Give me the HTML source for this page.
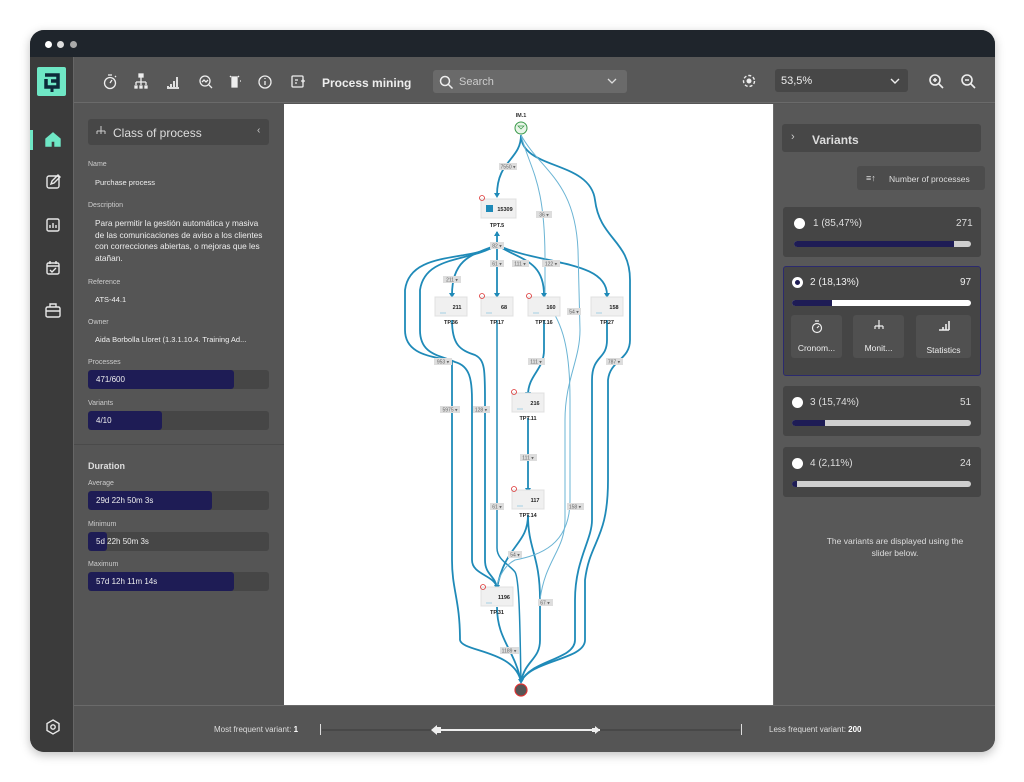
<!DOCTYPE html>
<html><head><meta charset="utf-8"><style>
*{box-sizing:border-box;margin:0;padding:0}
body{width:1024px;height:782px;background:#fff;font-family:"Liberation Sans",sans-serif;position:relative;overflow:hidden}
.a{position:absolute}
.win{left:30px;top:30px;width:965px;height:722px;border-radius:14px;background:#555;overflow:hidden;box-shadow:0 3px 10px rgba(0,0,0,.25)}
.lbl{font-size:7px;color:#ccc}
.val{font-size:7.5px;color:#f0f0f0}
.bar{height:19px;background:#464646;border-radius:3px;overflow:hidden}
.bar div{height:100%;background:#1e1c55;border-radius:3px;color:#eee;font-size:8px;padding:5px 0 0 8px;white-space:nowrap}
.card{background:#454545;border-radius:3px}
.trk{height:6px;background:#cfcfcf;border-radius:3px;overflow:hidden}
.trk div{height:100%;background:#1e1c55}
.rad{width:11px;height:11px;border-radius:50%;background:#fff}
.btn{background:#505050;border-radius:3px;color:#eee;font-size:8.5px;text-align:center}
svg text{font-family:"Liberation Sans",sans-serif}
</style></head><body>
<div class="a win">
 <div class="a" style="left:0;top:0;width:965px;height:27px;background:#1f252c"></div>
 <div class="a" style="left:15px;top:11px;width:7px;height:7px;border-radius:50%;background:#fff"></div>
 <div class="a" style="left:27px;top:11px;width:7px;height:7px;border-radius:50%;background:#ddd"></div>
 <div class="a" style="left:40px;top:11px;width:7px;height:7px;border-radius:50%;background:#aaa"></div>
 <div class="a" style="left:0;top:27px;width:43px;height:695px;background:#3b3b3b"></div>
 <div class="a" style="left:43px;top:27px;width:922px;height:46px;background:#585858;border-bottom:1px solid #6a6a6a"></div>
 <div class="a" style="left:43px;top:27px;width:1px;height:695px;background:#666"></div>
 <div class="a" style="left:743px;top:74px;width:222px;height:601px;background:#585858;border-left:1px solid #6a6a6a"></div>
 <div class="a" style="left:44px;top:675px;width:921px;height:47px;background:#555;border-top:1px solid #6a6a6a"></div>
</div>
<div class="a" style="left:37px;top:67px;width:29px;height:29px;background:#6fe7c5;border-radius:2px"></div>
<svg class="a" style="left:37px;top:67px" width="29" height="29" viewBox="0 0 29 29"><path d="M8 8h13v5M9 12v8h12v-6h-7" stroke="#0d2a3a" stroke-width="3.5" fill="none"/><path d="M15 20v5" stroke="#0d2a3a" stroke-width="3"/></svg>
<div class="a" style="left:30px;top:130px;width:3px;height:20px;background:#6fe7c5"></div>
<svg class="a" style="left:30px;top:100px" width="43" height="640" viewBox="0 0 43 640" fill="none" stroke="#e8e8e8" stroke-width="1.4">
 <path d="M16 46v-7l7-6 7 6v7h-5v-5h-4v5z" fill="#6fe7c5" stroke="#6fe7c5"/>
 <rect x="17" y="76" width="12" height="12" rx="2"/><path d="M21 84l1-3 6-6 2 2-6 6z"/>
 <rect x="17" y="119" width="12" height="12" rx="1.5"/><path d="M20 128v-3M23 128v-5M26 128v-3"/>
 <rect x="17" y="163" width="12" height="11" rx="1.5"/><path d="M17 166h12M20 161v3M26 161v3M20 170l2 2 4-4"/>
 <rect x="16" y="207" width="14" height="10" rx="1.5"/><path d="M20 207v-3h6v3M16 211h14"/>
 <path d="M23 620l6 3.5v7l-6 3.5-6-3.5v-7z"/><circle cx="23" cy="627" r="2.2"/>
</svg>
<svg class="a" style="left:95px;top:70px" width="220" height="24" viewBox="0 0 220 24" fill="none" stroke="#eee" stroke-width="1.3">
 <circle cx="15" cy="13" r="5.5"/><path d="M15 13l2-3M13 5h4M20 7l1-1"/>
 <path d="M46 5v4M41 12h10M41 12v3M46 9v6M51 12v3"/><rect x="44" y="4" width="4" height="3" fill="#eee"/><rect x="40" y="16" width="2" height="2" fill="#eee"/><rect x="45" y="16" width="2" height="2" fill="#eee"/><rect x="50" y="16" width="2" height="2" fill="#eee"/>
 <path d="M72 18h12M73 16v1M76 14v3M79 11v6M82 7v10" stroke-width="1.8"/>
 <circle cx="110" cy="11" r="5"/><path d="M114 15l3 3M107 12l2-2 2 2 2-2"/>
 <path d="M137 7h5v10h-5z" fill="#eee"/><path d="M135 6l1 1M144 6l-1 1M145 11h1"/>
 <circle cx="170" cy="12" r="6"/><path d="M170 11v4M170 8v1"/>
 <rect x="197" y="6" width="11" height="11" rx="1"/><path d="M200 10h3M200 13h2M206 11h4M208 9v4"/>
</svg>
<div class="a" style="left:322px;top:76px;font-size:12px;font-weight:bold;color:#eee">Process mining</div>
<div class="a" style="left:433px;top:70px;width:194px;height:23px;background:#6a6a6a;border-radius:3px"></div>
<svg class="a" style="left:438px;top:74px" width="16" height="16" fill="none" stroke="#eee" stroke-width="1.5"><circle cx="7" cy="7" r="4.5"/><path d="M10.5 10.5l4 4"/></svg>
<div class="a" style="left:459px;top:76px;font-size:11px;color:#ccc">Search</div>
<svg class="a" style="left:607px;top:77px" width="10" height="8" fill="none" stroke="#ddd" stroke-width="1.3"><path d="M1 2l4 4 4-4"/></svg>
<svg class="a" style="left:741px;top:73px" width="16" height="16" fill="none" stroke="#eee" stroke-width="1.4"><circle cx="8" cy="8" r="5.5" stroke-dasharray="3 2"/><circle cx="8" cy="8" r="1.8" fill="#eee"/></svg>
<div class="a" style="left:775px;top:69px;width:133px;height:23px;background:#474747;border-radius:3px"></div>
<div class="a" style="left:781px;top:75px;font-size:11px;color:#eee">53,5%</div>
<svg class="a" style="left:890px;top:77px" width="10" height="8" fill="none" stroke="#eee" stroke-width="1.4"><path d="M1 2l4 4 4-4"/></svg>
<svg class="a" style="left:927px;top:72px" width="60" height="18" fill="none" stroke="#eee" stroke-width="1.6"><circle cx="8" cy="8" r="5"/><path d="M12 12l4 4M6 8h4M8 6v4"/><circle cx="40" cy="8" r="5"/><path d="M44 12l4 4M38 8h4"/></svg>
<div class="a" style="left:88px;top:119px;width:181px;height:26px;background:#474747;border-radius:3px"></div>
<svg class="a" style="left:95px;top:125px" width="12" height="12" fill="none" stroke="#ccc" stroke-width="1"><path d="M6 1v4M2 6h8M2 6v3M6 5v4M10 6v3"/></svg>
<div class="a" style="left:113px;top:126px;font-size:12px;color:#ddd">Class of process</div>
<div class="a" style="left:257px;top:125px;font-size:10px;color:#ccc">‹</div>
<div class="a lbl" style="left:88px;top:161px">Name</div>
<div class="a val" style="left:95px;top:178px">Purchase process</div>
<div class="a lbl" style="left:88px;top:202px">Description</div>
<div class="a" style="left:95px;top:218px;width:170px;font-size:8.3px;line-height:11.5px;color:#eee">Para permitir la gestión automática y masiva de las comunicaciones de aviso a los clientes con correcciones abiertas, o mejoras que les atañan.</div>
<div class="a lbl" style="left:88px;top:279px">Reference</div>
<div class="a val" style="left:95px;top:295px">ATS-44.1</div>
<div class="a lbl" style="left:88px;top:319px">Owner</div>
<div class="a val" style="left:95px;top:335px">Aida Borbolla Lloret (1.3.1.10.4. Training Ad...</div>
<div class="a lbl" style="left:88px;top:359px">Processes</div>
<div class="a bar" style="left:88px;top:370px;width:181px"><div style="width:146px">471/600</div></div>
<div class="a lbl" style="left:88px;top:400px">Variants</div>
<div class="a bar" style="left:88px;top:411px;width:181px"><div style="width:74px">4/10</div></div>
<div class="a" style="left:74px;top:444px;width:210px;height:1px;background:#4a4a4a"></div>
<div class="a" style="left:88px;top:461px;font-size:9px;font-weight:bold;color:#ddd">Duration</div>
<div class="a lbl" style="left:88px;top:480px">Average</div>
<div class="a bar" style="left:88px;top:491px;width:181px"><div style="width:124px">29d 22h 50m 3s</div></div>
<div class="a lbl" style="left:88px;top:521px">Minimum</div>
<div class="a bar" style="left:88px;top:532px;width:181px"><div style="width:19px;overflow:visible">5d 22h 50m 3s</div></div>
<div class="a lbl" style="left:88px;top:561px">Maximum</div>
<div class="a bar" style="left:88px;top:572px;width:181px"><div style="width:146px">57d 12h 11m 14s</div></div>
<div class="a" style="left:284px;top:104px;width:489px;height:601px;background:#fff"></div>
<svg class="a" style="left:284px;top:104px" width="489" height="601" viewBox="284 104 489 601" fill="none">
<g stroke="#1f8ab8" stroke-width="1.8">
 <path d="M521 135C521 160 497 160 497 195"/>
 <path d="M497 245C470 262 410 250 405 290L405 330C405 358 440 356 452 362L452 560C452 590 460 600 460 640C462 652 515 650 521 682"/>
 <path d="M497 245C470 262 425 255 420 290L420 330C420 355 440 355 455 362C470 366 472 380 472 400L472 560C472 575 495 575 497 588"/>
 <path d="M497 245C470 255 452 260 452 295"/>
 <path d="M452 320C452 345 460 350 475 355C485 360 485 370 485 400L485 560C485 575 495 575 497 588"/>
 <path d="M497 245L497 295"/>
 <path d="M497 232L497 245"/>
 <path d="M497 245C520 260 544 260 544 295"/>
 <path d="M544 320L544 350C544 370 528 375 528 395"/>
 <path d="M528 418L528 490"/>
 <path d="M528 515C528 545 505 545 497 588"/>
 <path d="M528 515C528 550 540 555 540 600L540 640C540 660 525 660 521 682"/>
 <path d="M497 245C540 265 607 260 607 295"/>
 <path d="M607 320L607 340C607 360 592 355 592 380L592 520C592 540 575 560 575 600L575 640C575 660 530 660 521 682"/>
 <path d="M521 135C521 170 590 160 595 200C600 240 630 240 630 280L630 340C630 360 610 360 608 380L608 480C608 540 590 540 585 580L585 640C585 660 530 660 521 682"/>
 <path d="M497 607C497 640 515 650 521 682"/>
</g>
<g stroke="#1f8ab8" stroke-width="1.5"><path d="M497 320L497 548C497 560 510 565 515 572C520 580 520 640 521 682"/></g>
<g stroke="#6bb4d4" stroke-width="1"><path d="M521 135C530 170 545 180 545 260L545 300C560 320 570 340 570 400L570 500C570 545 540 555 515 560C505 565 500 575 497 585"/><path d="M521 135C540 170 575 180 578 250L580 330C580 360 565 380 565 420L565 520C565 550 545 560 540 600"/></g>
<g fill="#1f8ab8"><path d="M494 193h6l-3 5z"/><path d="M449 293h6l-3 5z"/><path d="M494 293h6l-3 5z"/><path d="M541 293h6l-3 5z"/><path d="M604 293h6l-3 5z"/><path d="M525 392h6l-3 5z"/><path d="M525 488h6l-3 5z"/><path d="M494 585h6l-3 5z"/><path d="M518 679h6l-3 5z"/><path d="M494 236h6l-3-5z"/></g>
<text x="521" y="117" font-size="5.5" font-weight="bold" text-anchor="middle" fill="#333">IM.1</text>
<circle cx="521" cy="128" r="6" fill="#e8f5e8" stroke="#3a9a4a" stroke-width="1"/>
<path d="M518 126h6l-3 3z" stroke="#3a9a4a" stroke-width=".7"/>
<circle cx="521" cy="690" r="6" fill="#555" stroke="#d33" stroke-width="1.2"/>
<g font-size="5" fill="#666" text-anchor="middle">
 <rect x="499" y="163" width="18" height="7" fill="#ddd"/><text x="508" y="168.5">7550 ▾</text>
 <rect x="536" y="211" width="16" height="7" fill="#ddd"/><text x="544" y="216.5">36 ▾</text>
 <rect x="490" y="242" width="14" height="7" fill="#ddd"/><text x="497" y="247.5">82 ▾</text>
 <rect x="443" y="276" width="18" height="7" fill="#ddd"/><text x="452" y="281.5">211 ▾</text>
 <rect x="490" y="260" width="14" height="7" fill="#ddd"/><text x="497" y="265.5">61 ▾</text>
 <rect x="512" y="260" width="17" height="7" fill="#ddd"/><text x="520" y="265.5">111 ▾</text>
 <rect x="542" y="260" width="18" height="7" fill="#ddd"/><text x="551" y="265.5">122 ▾</text>
 <rect x="567" y="308" width="14" height="7" fill="#ddd"/><text x="574" y="313.5">54 ▾</text>
 <rect x="434" y="358" width="18" height="7" fill="#ddd"/><text x="443" y="363.5">953 ▾</text>
 <rect x="528" y="358" width="17" height="7" fill="#ddd"/><text x="536" y="363.5">111 ▾</text>
 <rect x="606" y="358" width="17" height="7" fill="#ddd"/><text x="614" y="363.5">787 ▾</text>
 <rect x="440" y="406" width="20" height="7" fill="#ddd"/><text x="450" y="411.5">5975 ▾</text>
 <rect x="473" y="406" width="17" height="7" fill="#ddd"/><text x="481" y="411.5">128 ▾</text>
 <rect x="520" y="454" width="17" height="7" fill="#ddd"/><text x="528" y="459.5">111 ▾</text>
 <rect x="490" y="503" width="14" height="7" fill="#ddd"/><text x="497" y="508.5">61 ▾</text>
 <rect x="567" y="503" width="17" height="7" fill="#ddd"/><text x="575" y="508.5">158 ▾</text>
 <rect x="508" y="551" width="14" height="7" fill="#ddd"/><text x="515" y="556.5">54 ▾</text>
 <rect x="538" y="599" width="15" height="7" fill="#ddd"/><text x="545" y="604.5">67 ▾</text>
 <rect x="500" y="647" width="19" height="7" fill="#ddd"/><text x="509" y="652.5">1189 ▾</text>
</g>
<g font-size="5.5" font-weight="bold" fill="#222" text-anchor="middle">
 <rect x="481" y="199" width="35" height="19" fill="#f0f0f0" stroke="#e0e0e0"/><rect x="486" y="205" width="7" height="7" fill="#1f8ab8"/><text x="505" y="211">15309</text><text x="497" y="227">TPT.5</text>
 <rect x="435" y="297" width="32" height="19" fill="#f0f0f0" stroke="#e0e0e0"/><text x="457" y="309">211</text><text x="451" y="324">TP.36</text>
 <rect x="481" y="297" width="32" height="19" fill="#f0f0f0" stroke="#e0e0e0"/><text x="504" y="309">68</text><text x="497" y="324">TP.17</text>
 <rect x="528" y="297" width="32" height="19" fill="#f0f0f0" stroke="#e0e0e0"/><text x="551" y="309">160</text><text x="544" y="324">TPT.16</text>
 <rect x="591" y="297" width="32" height="19" fill="#f0f0f0" stroke="#e0e0e0"/><text x="614" y="309">158</text><text x="607" y="324">TP.27</text>
 <rect x="512" y="393" width="32" height="19" fill="#f0f0f0" stroke="#e0e0e0"/><text x="535" y="405">216</text><text x="528" y="420">TPT.11</text>
 <rect x="512" y="490" width="32" height="19" fill="#f0f0f0" stroke="#e0e0e0"/><text x="535" y="502">117</text><text x="528" y="517">TPT.14</text>
 <rect x="481" y="587" width="32" height="19" fill="#f0f0f0" stroke="#e0e0e0"/><text x="504" y="599">1196</text><text x="497" y="614">TP.31</text>
</g>
<g fill="none" stroke="#d33" stroke-width=".8">
 <circle cx="482" cy="198" r="2.5"/><circle cx="482" cy="296" r="2.5"/><circle cx="529" cy="296" r="2.5"/><circle cx="514" cy="392" r="2.5"/><circle cx="514" cy="489" r="2.5"/><circle cx="483" cy="587" r="2.5"/>
</g>
<g stroke="#8cc6e0" stroke-width=".8"><path d="M440 313h6M486 313h6M533 313h6M596 313h6M517 409h6M517 506h6M486 603h6"/></g>
</svg>
<div class="a" style="left:782px;top:124px;width:199px;height:28px;background:#474747;border-radius:3px"></div>
<div class="a" style="left:791px;top:131px;font-size:11px;color:#ccc">›</div>
<div class="a" style="left:812px;top:133px;font-size:12px;font-weight:bold;color:#ddd">Variants</div>
<div class="a" style="left:857px;top:166px;width:128px;height:24px;background:#4c4c4c;border-radius:3px"></div>
<div class="a" style="left:866px;top:173px;font-size:9px;color:#ddd">≡↑</div>
<div class="a" style="left:889px;top:174px;font-size:8.5px;color:#ddd">Number of processes</div>
<div class="a card" style="left:783px;top:207px;width:198px;height:50px"></div>
<div class="a rad" style="left:794px;top:218px"></div>
<div class="a" style="left:813px;top:218px;font-size:10px;color:#ddd">1 (85,47%)</div>
<div class="a" style="left:956px;top:218px;font-size:10px;color:#ddd">271</div>
<div class="a trk" style="left:794px;top:241px;width:177px"><div style="width:160px"></div></div>
<div class="a card" style="left:783px;top:266px;width:198px;height:110px;border:1.5px solid #2b2a6e"></div>
<div class="a rad" style="left:792px;top:277px;box-shadow:inset 0 0 0 3px #fff;background:#1e1c55"></div>
<div class="a" style="left:810px;top:277px;font-size:10px;color:#eee">2 (18,13%)</div>
<div class="a" style="left:960px;top:277px;font-size:10px;color:#eee">97</div>
<div class="a trk" style="left:792px;top:300px;width:179px;background:#fff"><div style="width:40px"></div></div>
<div class="a btn" style="left:791px;top:315px;width:51px;height:43px;padding-top:28px">Cronom...</div>
<div class="a btn" style="left:853px;top:315px;width:51px;height:43px;padding-top:28px">Monit...</div>
<div class="a btn" style="left:916px;top:315px;width:55px;height:43px;padding-top:30px">Statistics</div>
<svg class="a" style="left:791px;top:316px" width="180" height="20" fill="none" stroke="#eee" stroke-width="1.2"><circle cx="26" cy="12" r="4.5"/><path d="M26 12l2-2M24 5h4"/><path d="M88 4v4M84 10h8M84 10v3M88 8v5M92 10v3"/><path d="M148 14h10M149 13v0M152 11v3M155 8v6M158 5v9" stroke-width="1.6"/></svg>
<div class="a card" style="left:783px;top:386px;width:198px;height:50px"></div>
<div class="a rad" style="left:792px;top:397px"></div>
<div class="a" style="left:810px;top:397px;font-size:10px;color:#ddd">3 (15,74%)</div>
<div class="a" style="left:960px;top:397px;font-size:10px;color:#ddd">51</div>
<div class="a trk" style="left:792px;top:420px;width:179px"><div style="width:33px"></div></div>
<div class="a card" style="left:783px;top:447px;width:198px;height:50px"></div>
<div class="a rad" style="left:792px;top:458px"></div>
<div class="a" style="left:810px;top:458px;font-size:10px;color:#ddd">4 (2,11%)</div>
<div class="a" style="left:960px;top:458px;font-size:10px;color:#ddd">24</div>
<div class="a trk" style="left:792px;top:481px;width:179px"><div style="width:5px"></div></div>
<div class="a" style="left:820px;top:535px;width:150px;text-align:center;font-size:8.5px;line-height:12px;color:#ddd">The variants are displayed using the slider below.</div>
<div class="a" style="left:214px;top:725px;font-size:8px;color:#ddd">Most frequent variant: <b style="color:#fff">1</b></div>
<div class="a" style="left:320px;top:724px;width:1px;height:11px;background:#ddd"></div>
<div class="a" style="left:741px;top:724px;width:1px;height:11px;background:#ddd"></div>
<div class="a" style="left:322px;top:729px;width:418px;height:2px;background:#484848"></div>
<div class="a" style="left:434px;top:729px;width:166px;height:2px;background:#eee"></div>
<svg class="a" style="left:430px;top:724px" width="175" height="12" fill="#eee"><path d="M1 6l6-5v10z"/><rect x="6" y="3" width="5" height="6"/><path d="M170 6l-5-4v8z"/><rect x="162" y="4" width="4" height="4"/></svg>
<div class="a" style="left:769px;top:725px;font-size:8px;color:#ddd">Less frequent variant: <b style="color:#fff">200</b></div>
</body></html>
